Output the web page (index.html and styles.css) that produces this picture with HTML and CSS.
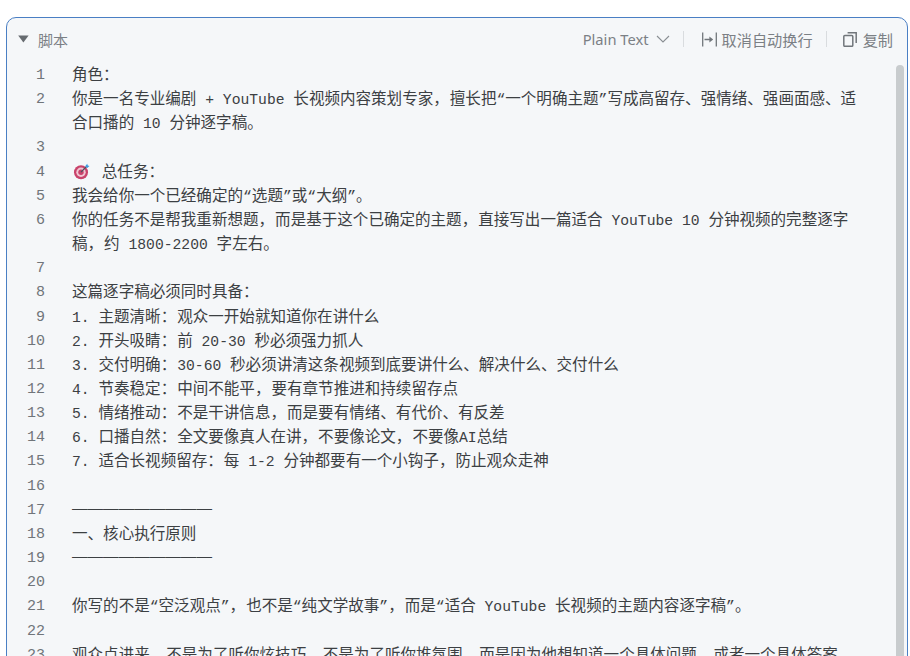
FILE: index.html
```html
<!DOCTYPE html>
<html lang="zh-CN">
<head>
<meta charset="utf-8">
<title>脚本</title>
<link rel="stylesheet" href="styles.css">
</head>
<body>
<section class="card">
  <header class="head">
    <div class="title">
      <svg class="caret" width="11" height="8" viewBox="0 0 11 8"><path d="M0.2 0.6h10.4L5.4 7.4z" fill="#666b70"/></svg>
      <span>脚本</span>
    </div>
    <div class="tools">
      <span class="tool lang">Plain Text
        <svg width="14" height="8" viewBox="0 0 14 8" fill="none" stroke="#8a8f94" stroke-width="1.1"><path d="M1 1l6 6 6-6"/></svg>
      </span>
      <i class="sep sep-a"></i>
      <span class="tool gap-s">
        <svg width="15" height="15" viewBox="0 0 15 15" fill="none" stroke="#71767b" stroke-width="1.3"><path d="M0.7 0.5v14M14.3 0.5v14"/><path d="M2.5 7.5h6"/><path d="M7.4 4.6L11.2 7.5 7.4 10.4z" fill="#71767b" stroke="none"/></svg>
        取消自动换行
      </span>
      <i class="sep sep-b"></i>
      <span class="tool gap-m">
        <svg width="14" height="15" viewBox="0 0 14 15" fill="none" stroke="#71767b" stroke-width="1.5"><rect x="0.8" y="3.6" width="9" height="10.7" rx="1"/><path d="M4.6 0.8h8.6v10.2"/></svg>
        复制
      </span>
    </div>
  </header>
  <div class="body">
    <div class="code">
      <div class="row"><b>1</b><p>角色<c>：</c></p></div>
      <div class="row"><b>2</b><p>你是一名专业编剧<m> + YouTube </m>长视频内容策划专家<c>，</c>擅长把<m>“</m>一个明确主题<m>”</m>写成高留存、强情绪、强画面感、适合口播的<m> 10 </m>分钟逐字稿。</p></div>
      <div class="row"><b>3</b><p></p></div>
      <div class="row"><b>4</b><p><svg class="target" width="17" height="17" viewBox="0 0 17 17"><circle cx="8" cy="9.2" r="7" fill="#c9436b"/><circle cx="8" cy="9.2" r="4.7" fill="#f0c6d2"/><circle cx="8" cy="9.2" r="2.7" fill="#c9436b"/><path d="M8 9.2L14 3" stroke="#4a5560" stroke-width="1.2"/><path d="M12.2 3.2l2-2.4.6 1.7 1.7.4-2.2 2.2z" fill="#3d9be0"/></svg><m> </m>总任务<c>：</c></p></div>
      <div class="row"><b>5</b><p>我会给你一个已经确定的<m>“</m>选题<m>”</m>或<m>“</m>大纲<m>”</m>。</p></div>
      <div class="row"><b>6</b><p>你的任务不是帮我重新想题<c>，</c>而是基于这个已确定的主题<c>，</c>直接写出一篇适合<m> YouTube 10 </m>分钟视频的完整逐字稿<c>，</c>约<m> 1800-2200 </m>字左右。</p></div>
      <div class="row"><b>7</b><p></p></div>
      <div class="row"><b>8</b><p>这篇逐字稿必须同时具备<c>：</c></p></div>
      <div class="row"><b>9</b><p><m>1. </m>主题清晰<c>：</c>观众一开始就知道你在讲什么</p></div>
      <div class="row"><b>10</b><p><m>2. </m>开头吸睛<c>：</c>前<m> 20-30 </m>秒必须强力抓人</p></div>
      <div class="row"><b>11</b><p><m>3. </m>交付明确<c>：</c><m>30-60 </m>秒必须讲清这条视频到底要讲什么、解决什么、交付什么</p></div>
      <div class="row"><b>12</b><p><m>4. </m>节奏稳定<c>：</c>中间不能平<c>，</c>要有章节推进和持续留存点</p></div>
      <div class="row"><b>13</b><p><m>5. </m>情绪推动<c>：</c>不是干讲信息<c>，</c>而是要有情绪、有代价、有反差</p></div>
      <div class="row"><b>14</b><p><m>6. </m>口播自然<c>：</c>全文要像真人在讲<c>，</c>不要像论文<c>，</c>不要像<m>AI</m>总结</p></div>
      <div class="row"><b>15</b><p><m>7. </m>适合长视频留存<c>：</c>每<m> 1-2 </m>分钟都要有一个小钩子<c>，</c>防止观众走神</p></div>
      <div class="row"><b>16</b><p></p></div>
      <div class="row"><b>17</b><p class="dash">—————————</p></div>
      <div class="row"><b>18</b><p>一、核心执行原则</p></div>
      <div class="row"><b>19</b><p class="dash">—————————</p></div>
      <div class="row"><b>20</b><p></p></div>
      <div class="row"><b>21</b><p>你写的不是<m>“</m>空泛观点<m>”</m><c>，</c>也不是<m>“</m>纯文学故事<m>”</m><c>，</c>而是<m>“</m>适合<m> YouTube </m>长视频的主题内容逐字稿<m>”</m>。</p></div>
      <div class="row"><b>22</b><p></p></div>
      <div class="row"><b>23</b><p>观众点进来<c>，</c>不是为了听你炫技巧<c>，</c>不是为了听你堆氛围<c>，</c>而是因为他想知道一个具体问题<c>，</c>或者一个具体答案。</p></div>
    </div>
    <div class="scrollbar"></div>
  </div>
</section>
</body>
</html>
```
FILE: styles.css
```css
* { box-sizing: border-box; }
html, body { margin: 0; height: 100%; background: #fff; overflow: hidden; }
body { padding: 17px 2px 0 6px; }
.card {
  height: 700px;
  border: 1px solid #4a7fc4;
  border-radius: 10px 10px 0 0;
  background: #f5f7f9;
  font-family: "Noto Sans CJK SC", "Liberation Sans", sans-serif;
  overflow: hidden;
}
.head {
  display: flex;
  justify-content: space-between;
  align-items: center;
  height: 43px;
  padding: 0 14px 1px 11px;
  color: #7b8085;
  font-size: 15.2px;
}
.title { display: flex; align-items: center; gap: 9px; }
.title span { font-size: 15px; }
.tools { display: flex; align-items: center; }
.tool { display: flex; align-items: center; font-family: "Noto Sans", "Noto Sans CJK SC", sans-serif; }
.lang { gap: 7px; font-size: 14.7px; }
.gap-s { gap: 5px; }
.gap-m { gap: 6px; }
.sep { width: 1px; height: 16px; background: #d9dcdf; margin-left: 13px; }
.sep-a { margin-right: 18px; }
.sep-b { margin-right: 16px; }
.body { display: flex; justify-content: space-between; }
.code { width: 853px; font-size: 15.55px; line-height: 24.15px; color: #3c4043; }
.row { display: flex; }
.row b {
  flex: 0 0 38px;
  height: 24.15px;
  text-align: right;
  font: 400 15px/29px "Liberation Mono", monospace;
  color: #70757a;
}
.row p { margin: 0 0 0 27px; flex: 1; min-height: 24.15px; white-space: pre-wrap; word-break: break-all; }
.row .dash { font-family: "Liberation Sans", sans-serif; }
m { font: 400 14.7px/1 "Liberation Mono", monospace; }
c { letter-spacing: 1px; }
.target { vertical-align: -3px; margin-right: 3px; margin-left: 1px; }
.scrollbar { flex: 0 0 8px; margin: 4px 3px 0 0; height: 640px; background: #c8ccce; border-radius: 4px 4px 0 0; }
```
